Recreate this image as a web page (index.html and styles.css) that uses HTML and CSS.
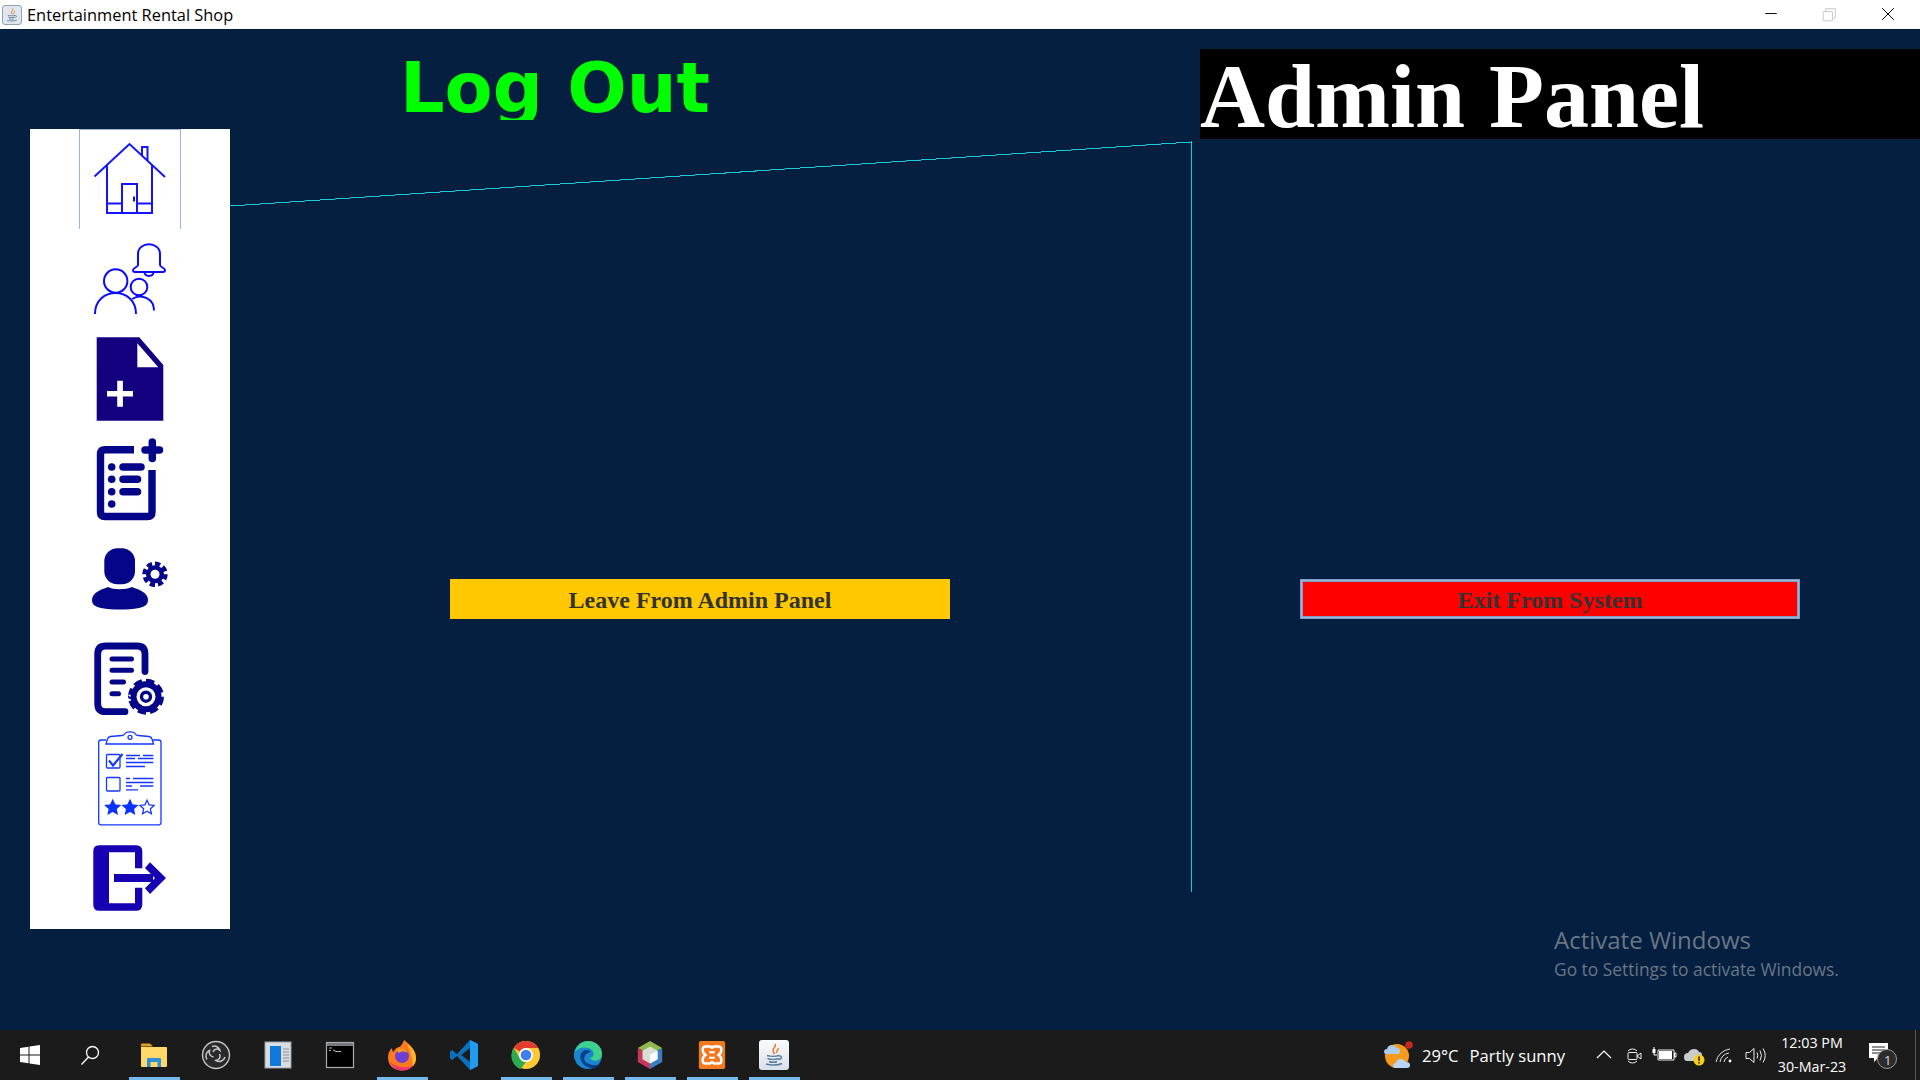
FILE: index.html
```html
<!DOCTYPE html>
<html lang="en">
<head>
<meta charset="utf-8">
<title>Entertainment Rental Shop</title>
<link rel="stylesheet" href="styles.css">
</head>
<body>
<svg class="defs" width="0" height="0" aria-hidden="true">
  <defs>
    <symbol id="java" viewBox="0 0 30 30">
      <path d="M16 4c2 3-3 4-2 7 .4 1.300 1 2 1.500 3M19 8c1 2-2 3-1.500 5" fill="none" stroke="#e07b24" stroke-width="1.500"/>
      <path d="M8 15.500c3 1 9 1 12 0M8.500 18.500c3 1 8 1 11 0M10 21.500c2 .8 6 .8 8 0M20 16c3-1 3.500 3-.5 3.500M7 24c4 1.500 12 1.500 16-.5" fill="none" stroke="#5a7d9a" stroke-width="1.400"/>
    </symbol>
    <polygon id="star" points="0,-7.500 2.100,-2.900 7.130,-2.320 3.400,1.100 4.410,6.070 0,3.600 -4.410,6.070 -3.400,1.100 -7.130,-2.320 -2.100,-2.900"/>
  </defs>
</svg>

<div class="window">
  <header class="titlebar">
    <div class="titlebar-name">
      <span class="app-badge"><svg class="app-cup"><use href="#java"/></svg></span>
      <span class="app-title">Entertainment Rental Shop</span>
    </div>
    <div class="window-controls">
      <svg class="wc" viewBox="0 0 60 29"><path d="M23 13.500h12" stroke="#000" fill="none"/></svg>
      <svg class="wc" viewBox="0 0 60 29"><path d="M23 11.500h9.500v9.500H23zM25.500 11.500V8.500h10v9.500h-3" stroke="#c8c8c8" fill="none"/></svg>
      <svg class="wc" viewBox="0 0 60 29"><path d="M24 8l12 12M36 8L24 20" stroke="#000" fill="none"/></svg>
    </div>
  </header>

  <main class="panel">
    <nav class="sidebar">
      <div class="nav-cell nav-cell-active">
        <svg class="nav-icon" viewBox="0 0 100 100" fill="none" stroke="#1414ff" stroke-width="2">
          <path d="M14.500 47.500L49.500 15l35.500 33M62 26.500V18h5.500v13.500M27 36v48h45V36"/>
          <path d="M42 84V55h15v29M27 74.500h15M57 74.500h15M54 67.500v5"/>
        </svg>
      </div>
      <div class="nav-cell">
        <svg class="nav-icon" viewBox="0 0 100 100" fill="none" stroke="#0a0aff" stroke-width="2">
          <path d="M58 36V25c0-13 22-13 22 0v11c0 2 5 3 5 5 0 1.500-1 2-2 2H55c-1 0-2-.5-2-2 0-2 5-3 5-5z"/>
          <path d="M64.500 43.500c.5 4.500 8.500 4.500 9 0"/>
          <circle cx="35.700" cy="52" r="11.700"/>
          <path d="M15 85c0-28 41-28 41 0"/>
          <circle cx="59" cy="58" r="8.300"/>
          <path d="M52 70c10-6 22 0 22 11.500"/>
        </svg>
      </div>
      <div class="nav-cell">
        <svg class="nav-icon" viewBox="0 0 100 100">
          <path d="M16.700 8.300H59.300L83.300 36V91.700H16.700z" fill="#13007f"/>
          <path d="M57.300 14.300V38.300H78.300z" fill="#fff"/>
          <path d="M37.200 51.700h5.700v10.200H53v5.700H42.900v10.200h-5.700V67.600H27v-5.700h10.200z" fill="#fff"/>
        </svg>
      </div>
      <div class="nav-cell">
        <svg class="nav-icon" viewBox="0 0 100 100" fill="none" stroke="#05058a">
          <path d="M54 20.700H25q-4.500 0-4.500 4.500V83q0 4.500 4.500 4.500H67.500q4.500 0 4.500-4.500V41" stroke-width="7.400"/>
          <path d="M72.300 13v16.500M65 21H79.500" stroke-width="7.500" stroke-linecap="round"/>
          <path d="M43 38H61M43 50.300H57.500M43 62.700H57.500" stroke-width="7.500" stroke-linecap="round"/>
          <g fill="#05058a" stroke="none"><circle cx="31.700" cy="38" r="3.800"/><circle cx="31.700" cy="50.300" r="3.800"/><circle cx="31.700" cy="62.700" r="3.800"/><circle cx="31.700" cy="75" r="3.800"/></g>
        </svg>
      </div>
      <div class="nav-cell">
        <svg class="nav-icon" viewBox="0 0 100 100">
          <rect x="24.300" y="19.300" width="30.700" height="36" rx="13" fill="#05058a"/>
          <path d="M12 71c0-7 8-10 16-13 6 3 17 3 24 0 8 3 16 6 16 13 0 5-4 7-9 8-12 2-26 2-38 0-5-1-9-3-9-8z" fill="#05058a"/>
          <circle cx="75" cy="45.300" r="9" fill="#05058a"/>
          <circle cx="75" cy="45.300" r="10.500" fill="none" stroke="#05058a" stroke-width="4.400" pathLength="48" stroke-dasharray="3.800 2.200"/>
          <circle cx="75" cy="45.300" r="4.500" fill="#fff"/>
        </svg>
      </div>
      <div class="nav-cell">
        <svg class="nav-icon" viewBox="0 0 100 100" fill="none" stroke="#05058a">
          <path d="M65 42.500V25q0-8-8-8H25.700q-8 0-8 8V74.700q0 8 8 8H45" stroke-width="6.800" stroke-linecap="round"/>
          <path d="M32 30H51.500M32 41.300H51.500M32 53H43.500M32 64.700H38.500" stroke-width="5" stroke-linecap="round"/>
          <circle cx="66" cy="67.700" r="16" fill="#fff" stroke="none"/>
          <circle cx="66" cy="67.700" r="12.500" stroke-width="6"/>
          <circle cx="66" cy="67.700" r="15.800" stroke-width="4.400" pathLength="48" stroke-dasharray="4 2"/>
          <circle cx="66" cy="67.700" r="4.500" stroke-width="3.400"/>
        </svg>
      </div>
      <div class="nav-cell">
        <svg class="nav-icon" viewBox="0 0 100 100" fill="none" stroke="#1537ff" stroke-width="1.300">
          <path d="M26 11H21q-2.300 0-2.300 2.300V93.500q0 2.300 2.300 2.300H78.700q2.300 0 2.300-2.300V13.300q0-2.300-2.300-2.300H73"/>
          <path d="M26 15l1.500-5q.5-2 3-2.500L42 6.500q2-.1 3-2c1.500-2.300 8.500-2.300 10 0q1 1.900 3 2L69 7.500q2.500.5 3 2.500l1.500 5z"/>
          <circle cx="50" cy="8.300" r="2"/>
          <rect x="26.500" y="25.500" width="13.500" height="13.500" rx="1"/>
          <path d="M29 31.500l4 5 9.500-11.500" stroke-width="2.200"/>
          <path d="M46 26.500H60M63 26.500H73.300M46 29.500H55M58 29.500H73.300M46 33.500H73.300M46 37.500H65"/>
          <rect x="26.500" y="48.500" width="13.500" height="13.500" rx="1"/>
          <path d="M46 49.500H50M53 49.500H73.300M46 53.500H73.300M46 57H52M60 57H73.300M46 60.800H58"/>
          <use href="#star" x="32.700" y="78.700" fill="#0a32ff" stroke="#0a32ff"/>
          <use href="#star" x="50" y="78.700" fill="#0a32ff" stroke="#0a32ff"/>
          <use href="#star" x="67" y="78.700" fill="#fff"/>
        </svg>
      </div>
      <div class="nav-cell">
        <svg class="nav-icon" viewBox="0 0 100 100">
          <path d="M19 16.300H56q6.300 0 6.300 6.300V39.300H55V23.300H29V74.300H55V58.700H62.300V75.400q0 6.300-6.300 6.300H19q-5.700 0-5.700-6.300V22.600q0-6.300 5.700-6.300z" fill="#1700b4"/>
          <path d="M34 45H73V53H34z" fill="#1700b4"/>
          <path d="M70 33.300L86 49 70 65 65 59.300 75 49 65 39z" fill="#1700b4"/>
        </svg>
      </div>
    </nav>

    <div class="content">
      <div class="content-head">
        <h1 class="logout-title">Log Out</h1>
        <div class="admin-bar"><h2 class="admin-title">Admin Panel</h2></div>
      </div>
      <div class="actions">
        <button class="btn btn-leave" type="button">Leave From Admin Panel</button>
        <button class="btn btn-exit" type="button">Exit From System</button>
      </div>
    </div>

    <svg class="guide-lines" viewBox="0 0 1920 1001" shape-rendering="crispEdges">
      <path d="M230 177L1191 113V863" fill="none" stroke="#19cbd8"/>
    </svg>

    <div class="activate">
      <div class="activate-main">Activate Windows</div>
      <div class="activate-sub">Go to Settings to activate Windows.</div>
    </div>
  </main>

  <footer class="taskbar">
    <div class="task-cell">
      <svg class="task-icon-sm" viewBox="0 0 20 20"><path d="M0 3l8.500-1.200V9.500H0zM9.500 1.600L20 0V9.500H9.500zM0 10.500H8.500V18.200L0 17zM9.500 10.500H20V20L9.500 18.400z" fill="#fff"/></svg>
    </div>
    <div class="task-cell task-cell-search">
      <svg class="task-icon-sm" viewBox="0 0 20 20" fill="none" stroke="#fff" stroke-width="1.300"><circle cx="12.500" cy="7.500" r="6"/><path d="M8.500 12L1.500 19.500"/></svg>
    </div>
    <div class="task-cell task-open">
      <svg class="task-icon" viewBox="0 0 30 30">
        <path d="M2 4.500q0-1 1-1h8l3 3H2z" fill="#e0a020"/>
        <path d="M2 7h25q1 0 1 1v18q0 1-1 1H3q-1 0-1-1z" fill="#ffd869"/>
        <path d="M8 27V19q0-1 1-1h12q1 0 1 1v8h-3.500v-5h-7v5z" fill="#2f8fd8"/>
      </svg>
    </div>
    <div class="task-cell">
      <svg class="task-icon" viewBox="0 0 30 30" fill="none">
        <circle cx="15" cy="15" r="13.500" fill="#2a2a2c" stroke="#c4c4c4" stroke-width="1.400"/>
        <path d="M11 6.500a6 6 0 0 1 8 4c-3-2.500-6-1.500-7 1.500M24 17a6 6 0 0 1-9 3.500c3.500-.5 5-3.500 3.500-6.500M6 19.500a6 6 0 0 1 2.500-9c-1 3.500 1 6 4 6.500" stroke="#c8c8c8" stroke-width="1.500"/>
      </svg>
    </div>
    <div class="task-cell">
      <svg class="task-icon" viewBox="0 0 30 30">
        <rect x="2" y="2" width="26" height="26" fill="#d8dde2" stroke="#9aa0a6"/>
        <rect x="7" y="6" width="11" height="20" fill="#0e78dc"/>
        <path d="M20 9h6M20 12h6M20 15h6M20 18h6M20 21h6" stroke="#8a8f94" stroke-width="1.200"/>
      </svg>
    </div>
    <div class="task-cell">
      <svg class="task-icon" viewBox="0 0 30 30">
        <rect x="1.500" y="2.500" width="27" height="25" fill="#000" stroke="#a9adb0" stroke-width="1.200"/>
        <rect x="2" y="3" width="26" height="3" fill="#77797c"/>
        <path d="M4 8h3M4 10.500h2M8 10l3 1.500h5" stroke="#b8b8b8" fill="none"/>
      </svg>
    </div>
    <div class="task-cell task-open">
      <svg class="task-icon-lg" viewBox="0 0 30 32">
        <path d="M17 1c5 4 12 9 12 18 0 7.500-6 12.500-14 12.500S1 26.500 1 18.500C1 14 3 10.500 5 9c0 2 .5 3 1.500 4 1-3 4-5 7-5.500 1-2 3-4 3.500-6.500z" fill="#ff7a1a"/>
        <path d="M20 5c5 3 9 8 9 14 0 3-1 6-3 8-1-8-2-15-6-22z" fill="#ffb52a"/>
        <path d="M3 23c3 6 8 8.500 12 8.500 5 0 9-2 11-5-5 3-15 3-23-3.500z" fill="#f0327a"/>
        <circle cx="15" cy="17" r="7" fill="#6e3fd0"/>
        <path d="M9 11c4-3 10-1 12 3-4-2-7-2-9 0z" fill="#ff9c20"/>
      </svg>
    </div>
    <div class="task-cell">
      <svg class="task-icon-lg" viewBox="0 0 30 32">
        <path d="M21 1l8 4v22l-8 4L8 17 3 21 1 19.500V12.500L3 11l5 4z" fill="#0a70bc"/>
        <path d="M21 1l8 4v22l-8 4zM21 9L12 16l9 7z" fill="#1f9cf0"/>
        <path d="M21 9L12 16l9 7z" fill="#1b1b1b"/>
      </svg>
    </div>
    <div class="task-cell task-open">
      <svg class="task-icon-lg" viewBox="0 0 32 32">
        <circle cx="16" cy="16" r="15" fill="#fcc934"/>
        <path d="M16 1A15 15 0 0 1 29 8.500H16a7.500 7.500 0 0 0-6.500 3.800L3 8.500A15 15 0 0 1 16 1z" fill="#e33b2e"/>
        <path d="M3 8.500l6.500 11.200a7.500 7.500 0 0 0 6.500 3.800L10 31A15 15 0 0 1 3 8.500z" fill="#2da94f"/>
        <circle cx="16" cy="16" r="7.500" fill="#fff"/>
        <circle cx="16" cy="16" r="5.700" fill="#3f7fe8"/>
      </svg>
    </div>
    <div class="task-cell task-open">
      <svg class="task-icon-lg" viewBox="0 0 32 32">
        <circle cx="16" cy="16" r="15" fill="#1a86d0"/>
        <path d="M2 13C4 5 10 1 16 1c8 0 15 6 15 14 0 4-3 7-7 7-3 0-5-1-6-3 3 0 4-2 4-4 0-4-4-7-10-7-4 0-8 2-10 5z" fill="#3fd08c"/>
        <path d="M12 20c0-4 3-7 7-7-1-2-4-3-6-2-4 1-6 5-5 9 1 5 6 10 13 10 3 0 6-2 8-5-3 2-7 2-10 1-4-1-7-3-7-6z" fill="#0c3f8a"/>
      </svg>
    </div>
    <div class="task-cell task-open">
      <svg class="task-icon-lg" viewBox="0 0 32 32">
        <path d="M16 1L29 8.500 16 16 3 8.500z" fill="#90b84a"/>
        <path d="M29 8.500V23.500L16 31V16z" fill="#3a7ec4"/>
        <path d="M3 8.500V23.500L16 31V16z" fill="#c8365a"/>
        <path d="M16 7l8 4.500V20.500L16 25 8 20.500V11.500z" fill="#d6dfd2"/>
        <path d="M16 16l8-4.500V20.500L16 25z" fill="#fff"/>
      </svg>
    </div>
    <div class="task-cell task-open">
      <svg class="task-icon-lg" viewBox="0 0 32 32">
        <rect x="2" y="1" width="28" height="30" rx="2" fill="#ef7a22"/>
        <path d="M9 7h4.500q2.500 0 2.500 2.500q0-2.500 2.500-2.500H23q3 0 3 3.500t-3 5.500q3 2 3 5.500T23 25h-4.500q-2.500 0-2.500-2.500q0 2.500-2.500 2.500H9q-3 0-3-3.500T9 16q-3-2-3-5.500T9 7z" fill="none" stroke="#fff" stroke-width="2.600"/>
        <path d="M13 13h6M13 19h6" stroke="#fff" stroke-width="2.200"/>
      </svg>
    </div>
    <div class="task-cell task-open">
      <span class="java-tile"><svg class="java-cup"><use href="#java"/></svg></span>
    </div>

    <div class="tray">
      <div class="weather">
        <svg class="weather-icon" viewBox="0 0 30 30">
          <circle cx="14" cy="16" r="12" fill="#f59a1c"/>
          <circle cx="26" cy="5" r="3.800" fill="#c5281f"/>
          <path d="M1 12q0-3 3-3 1-4 5-4 3 0 5 3 3 0 3 3t-2 3H3q-2 0-2-2z" fill="#a9cdf0"/>
          <path d="M10 26q0-3 3-3 1-4 5-4 3 0 5 3 4 0 4 3 0 3-3 3H12q-2 0-2-2z" fill="#b9d6f4"/>
        </svg>
        <span class="temp">29°C</span>
        <span class="forecast">Partly sunny</span>
      </div>
      <div class="tray-icons">
        <svg class="tray-icon" viewBox="0 0 30 30" fill="none" stroke="#fff"><path d="M8 18l7-7 7 7" stroke-width="1.200"/></svg>
        <svg class="tray-icon" viewBox="0 0 30 30" fill="none" stroke="#eee"><path d="M9 11a6 6 0 0 1 9 0M9 21a6 6 0 0 0 9 0"/><rect x="9" y="12.500" width="9" height="7" rx="1"/><path d="M18 16l4-3v6z"/></svg>
        <svg class="tray-icon" viewBox="0 0 30 30"><path d="M9 10h16v10H9z" fill="none" stroke="#eee"/><rect x="10" y="11" width="13" height="8" fill="#fff"/><path d="M25.500 13h1.500v4h-1.500zM5 7v8h3" fill="none" stroke="#fff"/><rect x="3.500" y="9" width="3" height="4" fill="#fff"/></svg>
        <svg class="tray-icon" viewBox="0 0 30 30"><path d="M5 17q0-4 4-4 2-4 6-4 4 0 5 3 3 0 3 3l-4 6H8q-3 0-3-4z" fill="#c8ccd0"/><circle cx="20" cy="20" r="5.500" fill="#f8d01c"/><rect x="19.300" y="16.500" width="1.500" height="4.500" fill="#222"/><rect x="19.300" y="22" width="1.500" height="1.500" fill="#222"/></svg>
        <svg class="tray-icon" viewBox="0 0 30 30" fill="none" stroke="#e0e0e0"><path d="M7 22a16 16 0 0 1 14-13M11 22a11 11 0 0 1 9-9M15 22a6 6 0 0 1 4-5"/><circle cx="21" cy="21" r="1.400" fill="#fff" stroke="none"/></svg>
        <svg class="tray-icon" viewBox="0 0 30 30" fill="none" stroke="#eee"><path d="M7 12.500h3.500L15 8.500v14l-4.500-4H7zM18 12.500q1.500 3 0 6M21 10.500q3 5 0 10M24 8.500q4.500 7 0 14"/></svg>
      </div>
      <div class="clock"><span>12:03 PM</span><span>30-Mar-23</span></div>
      <div class="notify">
        <svg class="notify-icon" viewBox="0 0 30 30">
          <path d="M2 3H21V18H11l-4 4v-4H2z" fill="#fff"/>
          <path d="M5 7H18M5 10H18M5 13H15" stroke="#222" stroke-width="1.200"/>
          <circle cx="20" cy="19" r="9.500" fill="#2c2c2c" stroke="#999"/>
        </svg>
        <span class="notify-count">1</span>
      </div>
    </div>
  </footer>
</div>
</body>
</html>
```

FILE: styles.css
```css
* { box-sizing: border-box; }

html, body {
  margin: 0;
  height: 100%;
}

.defs { position: absolute; }

.window {
  display: flex;
  flex-direction: column;
  width: 1920px;
  height: 1080px;
  overflow: hidden;
  background: #041f40;
}

/* title bar */
.titlebar {
  flex: 0 0 29px;
  display: flex;
  align-items: center;
  justify-content: space-between;
  background: #fff;
}

.titlebar-name {
  display: flex;
  align-items: center;
  padding-left: 2px;
}

.app-badge {
  display: flex;
  width: 20px;
  height: 20px;
  border: 1px solid #8ea4ba;
  border-radius: 3px;
  background: #dfe6ee;
}

.app-cup {
  width: 18px;
  height: 18px;
}

.app-title {
  margin-left: 5px;
  font: 16.4px "Open Sans", "Noto Sans", sans-serif;
  color: #000;
}

.window-controls {
  display: flex;
  padding-right: 3px;
}

.wc {
  width: 58px;
  height: 29px;
}

/* main panel */
.panel {
  position: relative;
  flex: 1;
  display: flex;
  padding-left: 30px;
}

.sidebar {
  flex: 0 0 200px;
  height: 800px;
  margin-top: 100px;
  display: flex;
  flex-direction: column;
  align-items: center;
  background: #fff;
}

.nav-cell {
  flex: 0 0 100px;
  width: 102px;
  display: flex;
  justify-content: center;
}

.nav-cell-active {
  border: 1px solid #9cb4d0;
  border-bottom: 0;
}

.nav-icon {
  display: block;
  width: 100px;
  height: 100px;
  flex: none;
}

.nav-cell-active .nav-icon {
  margin-top: -1px;
}

.content {
  flex: 1;
  display: flex;
  flex-direction: column;
}

.content-head {
  display: flex;
  justify-content: space-between;
  height: 110px;
  padding-left: 170px;
}

.logout-title {
  margin: 19px 0 0;
  height: 72px;
  overflow: hidden;
  font: bold 70px/80px "DejaVu Sans", sans-serif;
  color: #00ff00;
}

.admin-bar {
  width: 720px;
  height: 90px;
  margin-top: 20px;
  padding-top: 6px;
  background: #000;
}

.admin-title {
  margin: 0;
  font: bold 90px/84px "Liberation Serif", serif;
  word-spacing: 1.5px;
  color: #fff;
}

.actions {
  display: flex;
  gap: 350px;
  margin-top: 440px;
  padding-left: 220px;
}

.btn {
  width: 500px;
  height: 40px;
  padding: 2px 0 0;
  border: 0;
  font: bold 24px "Liberation Serif", serif;
  color: #333;
}

.btn-leave {
  background: #ffc800;
}

.btn-exit {
  background: #ff0000;
  border: 3px double #7f9dc4;
  outline: 1px solid #9db6d4;
  outline-offset: -2px;
}

.guide-lines {
  position: absolute;
  left: 0;
  top: 0;
  width: 1920px;
  height: 1001px;
  pointer-events: none;
}

.activate {
  position: absolute;
  left: 1554px;
  top: 895px;
  font-family: "Open Sans", "Noto Sans", sans-serif;
  color: #6a7686;
}

.activate-main {
  font-size: 24px;
  line-height: 32px;
}

.activate-sub {
  font-size: 17.4px;
  line-height: 26px;
}

/* taskbar */
.taskbar {
  flex: 0 0 50px;
  display: flex;
  align-items: stretch;
  gap: 11px;
  padding-left: 5px;
  background: #1b1b1b;
  font-family: "Open Sans", "Noto Sans", sans-serif;
  color: #fff;
}

.task-cell {
  position: relative;
  flex: 0 0 51px;
  display: flex;
  align-items: center;
  justify-content: center;
  padding-right: 2px;
}

.task-cell-search {
  padding-right: 6px;
}

.task-open::after {
  content: "";
  position: absolute;
  left: 0;
  right: 0;
  bottom: 0;
  height: 3px;
  background: #76b9ed;
}

.task-icon { width: 30px; height: 30px; }
.task-icon-sm { width: 20px; height: 20px; }
.task-icon-lg { width: 30px; height: 32px; }

.java-tile {
  display: flex;
  width: 30px;
  height: 30px;
  border-radius: 3px;
  background: linear-gradient(#fafcfe, #d8e0e8);
}

.java-cup { width: 30px; height: 30px; }

.tray {
  margin-left: auto;
  display: flex;
  align-items: stretch;
  padding-right: 4px;
}

.weather {
  display: flex;
  align-items: center;
  margin-right: 24px;
}

.weather-icon {
  width: 30px;
  height: 30px;
}

.temp {
  margin-left: 9px;
  font-size: 16.6px;
}

.forecast {
  margin-left: 11px;
  font-size: 16.6px;
}

.tray-icons {
  display: flex;
  align-items: center;
}

.tray-icon {
  width: 30px;
  height: 30px;
}

.clock {
  width: 86px;
  margin-right: 2px;
  display: flex;
  flex-direction: column;
  align-items: center;
  justify-content: center;
  gap: 4px;
  font-size: 14.3px;
  line-height: 20px;
}

.notify {
  position: relative;
  width: 50px;
  display: flex;
  align-items: center;
  justify-content: center;
}

.notify-icon {
  width: 30px;
  height: 30px;
}

.notify-count {
  position: absolute;
  left: 27px;
  top: 20px;
  font-size: 13px;
  line-height: 20px;
  color: #ddd;
}

.tray::after {
  content: "";
  width: 1px;
  margin-left: 8px;
  background: #555;
}
```
